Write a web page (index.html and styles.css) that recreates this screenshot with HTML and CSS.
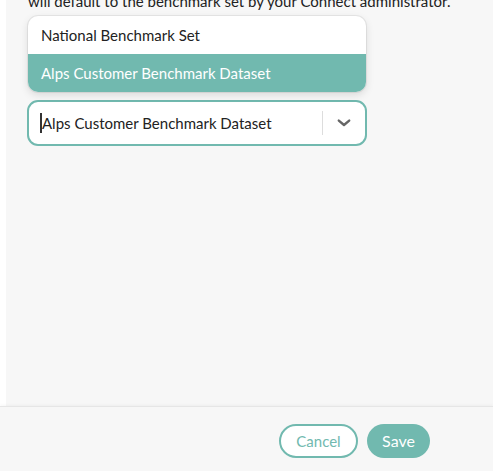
FILE: index.html
```html
<!DOCTYPE html>
<html lang="en">

<head>
    <meta charset="UTF-8">
    <meta name="viewport" content="width=device-width, initial-scale=1.0">
    <title>Benchmark</title>
    <link rel="stylesheet" href="styles.css">
</head>

<body>
    <div class="page">
        <div class="main">
            <p class="hint">will default to the benchmark set by your Connect administrator.</p>

            <div class="select-wrap">
                <!-- menu opens upward over the text -->
                <div class="menu">
                    <div class="option">National Benchmark Set</div>
                    <div class="option selected">Alps Customer Benchmark Dataset</div>
                </div>
                <div class="select">
                    <div class="value"><span class="caret"></span>Alps Customer Benchmark Dataset</div>
                    <div class="sep"></div>
                    <div class="arrow">
                        <svg width="16" height="16" viewBox="0 0 20 20">
                            <path d="M3.5 7 L10 12.5 L16.5 7" fill="none" stroke="#666" stroke-width="3" stroke-linecap="round" stroke-linejoin="round"/>
                        </svg>
                    </div>
                </div>
            </div>
        </div>

        <div class="footer">
            <button class="btn cancel">Cancel</button>
            <button class="btn save">Save</button>
        </div>
    </div>
</body>

</html>
```

FILE: styles.css
```css
body {
    margin: 0;
    background-color: #fff;
    font-family: Lato, "Open Sans", sans-serif;
    color: #222;
    overflow: hidden;
}

.page {
    display: flex;
    flex-direction: column;
    height: 100vh;
}

.main {
    flex: 1;
    margin-left: 6px;
    padding: 0 21px;
    background-color: #f7f7f7;
}

.hint {
    margin: -9px 0 0 1px;
    font-size: 15px;
    line-height: 20px;
}

.select-wrap {
    position: relative;
    width: 340px;
    margin-top: 89px;
}

.menu {
    position: absolute;
    left: 1px;
    right: 1px;
    bottom: calc(100% + 8px);
    background-color: #fff;
    border-radius: 10px;
    overflow: hidden;
    box-shadow: 0 0 0 1px rgba(0, 0, 0, 0.06), 0 3px 8px rgba(0, 0, 0, 0.12);
}

.option {
    height: 38px;
    line-height: 38px;
    padding: 0 13px;
    font-size: 15px;
}

.selected {
    background-color: #71b9af;
    color: #fff;
}

.select {
    display: flex;
    align-items: center;
    height: 46px;
    box-sizing: border-box;
    border: 2px solid #71b9af;
    border-radius: 11px;
    background-color: #fff;
}

.value {
    flex: 1;
    display: flex;
    align-items: center;
    padding-left: 11px;
    font-size: 15px;
}

.caret {
    width: 2px;
    height: 20px;
    background-color: #333;
}

.sep {
    width: 1px;
    height: 24px;
    background-color: #ddd;
}

.arrow {
    width: 42px;
    display: flex;
    justify-content: center;
    align-items: center;
}

.footer {
    height: 65px;
    border-top: 1px solid #e6e6e6;
    background-color: #f7f7f7;
    display: flex;
    justify-content: flex-end;
    align-items: center;
    gap: 9px;
    padding: 3px 63px 0 0;
    box-sizing: border-box;
    box-shadow: 0 -1px 3px rgba(0, 0, 0, 0.04);
}

.btn {
    height: 34px;
    border-radius: 17px;
    font-family: Lato, "Open Sans", sans-serif;
    font-size: 15px;
    cursor: pointer;
}

.cancel {
    width: 79px;
    border: 2px solid #71b9af;
    background-color: #fff;
    color: #71b9af;
}

.save {
    width: 63px;
    border: none;
    background-color: #71b9af;
    color: #fff;
    font-size: 16px;
}
```
